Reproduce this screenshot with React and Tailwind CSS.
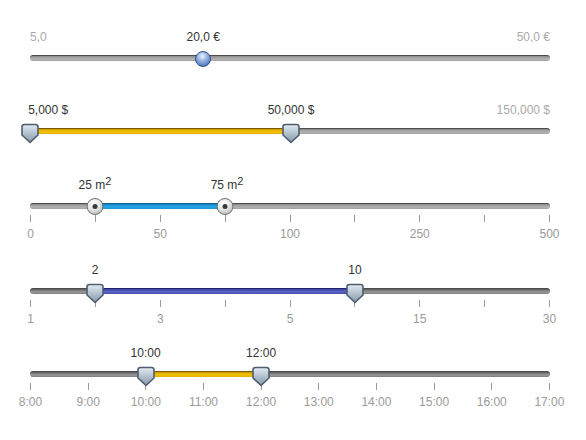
const FONT = { fontFamily: '"Liberation Sans", Arial, sans-serif' };

const pct = (v) => `${v}%`;

function PinHandle({ at }) {
  return (
    <div className="absolute -top-[6px] -translate-x-1/2" style={{ left: pct(at) }}>
      <svg width="19" height="21" viewBox="0 0 19 21">
        <defs>
          <linearGradient id="pinFill" x1="0" y1="0" x2="0" y2="1">
            <stop offset="0" stopColor="#e4ebf1" />
            <stop offset="0.45" stopColor="#b7c5d1" />
            <stop offset="1" stopColor="#8797a7" />
          </linearGradient>
        </defs>
        <path
          d="M4 1.5 H15 Q17.5 1.5 17.5 4 V12 L9.5 19.5 L1.5 12 V4 Q1.5 1.5 4 1.5 Z"
          fill="url(#pinFill)"
          stroke="#4d5e70"
          strokeWidth="1.6"
          strokeLinejoin="round"
        />
      </svg>
    </div>
  );
}

function KnobHandle({ at }) {
  return (
    <div
      className="absolute -top-[6px] flex h-[17px] w-[17px] -translate-x-1/2 items-center justify-center rounded-full border border-[#6f6f6f] bg-[radial-gradient(circle_at_40%_30%,#ffffff_0%,#e6e6e6_45%,#a8a8a8_100%)]"
      style={{ left: pct(at) }}
    >
      <div className="h-[5px] w-[5px] rounded-full bg-[#3a3a3a]" />
    </div>
  );
}

function BallHandle({ at }) {
  return (
    <div
      className="absolute -top-[5px] h-[16px] w-[16px] -translate-x-1/2 rounded-full border border-[#2f4f86] bg-[radial-gradient(circle_at_45%_30%,#eef4ff_0%,#9db8e6_35%,#4f77bd_80%,#3d61a3_100%)]"
      style={{ left: pct(at) }}
    />
  );
}

function Track({ from, to, fill, dark, children }) {
  return (
    <div
      className={`relative h-[6px] rounded-full border-t border-[#4a4a4a] ${
        dark
          ? 'bg-[linear-gradient(#5a5a5a,#9a9a9a_60%,#7c7c7c)]'
          : 'bg-[linear-gradient(#8a8a8a,#b4b4b4_60%,#a0a0a0)]'
      }`}
    >
      {fill && (
        <div
          className={`absolute -top-px h-[6px] ${fill}`}
          style={{ left: pct(from), width: pct(to - from) }}
        />
      )}
      {children}
    </div>
  );
}

// Scale below a track: evenly spaced ticks, labels on every `every`-th tick
function Scale({ labels, count, every = 1 }) {
  return (
    <div className="mt-[6px] flex flex-col gap-[4px]">
      <div className="flex h-[7px] justify-between">
        {Array.from({ length: count }).map((_, i) => (
          <div key={i} className="h-full w-px bg-[#9a9a9a]" />
        ))}
      </div>
      <div className="flex h-4 justify-between">
        {Array.from({ length: count }).map((_, i) => (
          <div key={i} className="flex w-px justify-center">
            {i % every === 0 && (
              <span className="whitespace-nowrap text-[12px] leading-4 text-[#9a9a9a]">
                {labels[i / every]}
              </span>
            )}
          </div>
        ))}
      </div>
    </div>
  );
}

function ValueLabel({ at, children }) {
  return (
    <span
      className="absolute bottom-0 -translate-x-1/2 whitespace-nowrap text-[12px] leading-4 text-[#333]"
      style={{ left: pct(at) }}
    >
      {children}
    </span>
  );
}

function Bounds({ min, max }) {
  return (
    <div className="absolute inset-0 flex items-end justify-between text-[12px] leading-4 text-[#aaa]">
      <span>{min}</span>
      <span>{max}</span>
    </div>
  );
}

function Sq() {
  return <sup className="relative -top-[4px] align-baseline text-[11px]">2</sup>;
}

const YELLOW = 'border-t border-[#7a5b00] bg-[linear-gradient(#c99700,#f2c200_50%,#e2b000)]';
const hourStep = 100 / 9;
const hours = ['8:00', '9:00', '10:00', '11:00', '12:00', '13:00', '14:00', '15:00', '16:00', '17:00'];

export default function App() {
  return (
    <div className="h-[440px] w-[586px] bg-white" style={FONT}>
      <div className="ml-[30px] flex w-[520px] flex-col pt-[29px]">
        {/* price, single value */}
        <div className="relative mb-[10px] h-4">
          <Bounds min="5,0" max="50,0 €" />
          <ValueLabel at={33.3}>20,0 €</ValueLabel>
        </div>
        <Track>
          <BallHandle at={33.3} />
        </Track>

        {/* budget range */}
        <div className="relative mt-[41px] mb-[10px] h-4">
          <Bounds min="" max="150,000 $" />
          <ValueLabel at={3.5}>5,000 $</ValueLabel>
          <ValueLabel at={50.2}>50,000 $</ValueLabel>
        </div>
        <Track from={0} to={50.2} fill={`rounded-l-full ${YELLOW}`}>
          <PinHandle at={0} />
          <PinHandle at={50.2} />
        </Track>

        {/* area range */}
        <div className="relative mt-[43px] mb-[10px] h-4">
          <ValueLabel at={12.5}>
            25 m<Sq />
          </ValueLabel>
          <ValueLabel at={37.9}>
            75 m<Sq />
          </ValueLabel>
        </div>
        <Track
          from={12.5}
          to={37.5}
          fill="border-t border-[#0d5f8a] bg-[linear-gradient(#1583c0,#27a6e6_50%,#1b93d3)]"
        >
          <KnobHandle at={12.5} />
          <KnobHandle at={37.5} />
        </Track>
        <Scale count={9} every={2} labels={['0', '50', '100', '250', '500']} />

        {/* count range */}
        <div className="relative mt-[20px] mb-[10px] h-4">
          <ValueLabel at={12.5}>2</ValueLabel>
          <ValueLabel at={62.5}>10</ValueLabel>
        </div>
        <Track
          dark
          from={12.5}
          to={62.5}
          fill="border-t border-[#23266e] bg-[linear-gradient(#3a3f9a,#5a60c4_50%,#4b51b2)]"
        >
          <PinHandle at={12.5} />
          <PinHandle at={62.5} />
        </Track>
        <Scale count={9} every={2} labels={['1', '3', '5', '15', '30']} />

        {/* time range */}
        <div className="relative mt-[18px] mb-[10px] h-4">
          <ValueLabel at={hourStep * 2}>10:00</ValueLabel>
          <ValueLabel at={hourStep * 4}>12:00</ValueLabel>
        </div>
        <Track dark from={hourStep * 2} to={hourStep * 4} fill={YELLOW}>
          <PinHandle at={hourStep * 2} />
          <PinHandle at={hourStep * 4} />
        </Track>
        <Scale count={10} labels={hours} />
      </div>
    </div>
  );
}
